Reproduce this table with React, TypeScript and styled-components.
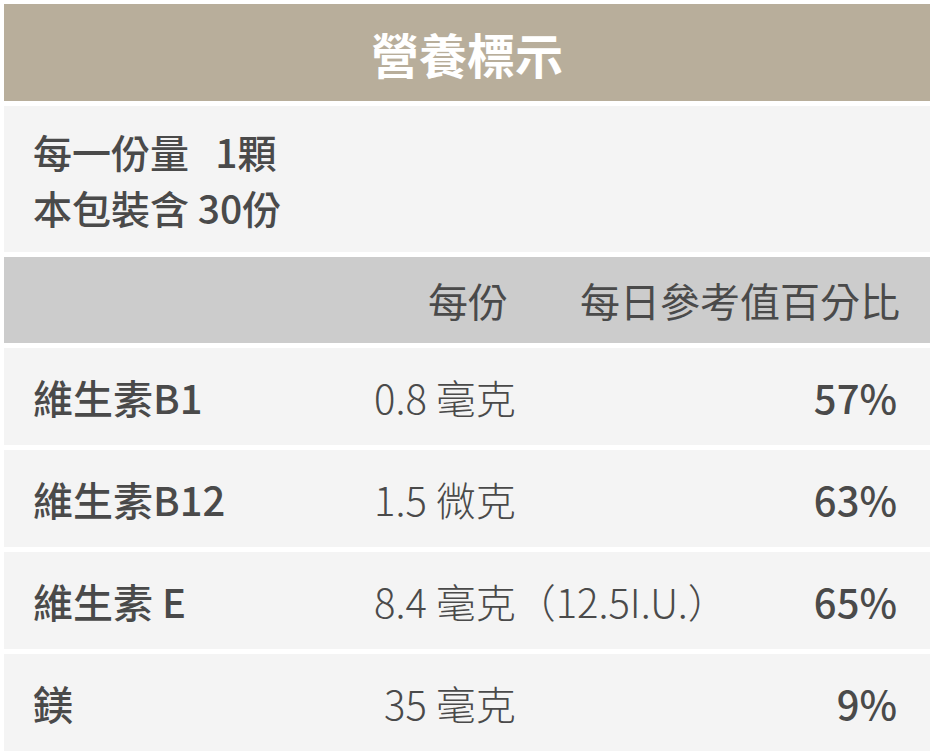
import React from 'react';
import styled, { createGlobalStyle } from 'styled-components';

const GlobalStyle = createGlobalStyle`
    html, body {
        margin: 0;
        padding: 0;
        background: #ffffff;
    }
    body {
        font-family: "Noto Sans CJK TC", "Noto Sans", sans-serif;
        color: #4a4a4a;
    }
`;

const LabelContainer = styled.div`
    width: 926px;
    padding: 4px;
    display: flex;
    flex-direction: column;
    gap: 5px;
`;

const Title = styled.div`
    height: 97px;
    background-color: #b8ae9b;
    color: #ffffff;
    font-size: 48px;
    font-weight: 700;
    display: flex;
    align-items: center;
    justify-content: center;
`;

const ServingBox = styled.div`
    height: 146px;
    background-color: #f4f4f4;
    padding: 0 29px;
    box-sizing: border-box;
    display: flex;
    flex-direction: column;
    justify-content: center;
    font-size: 39px;
    font-weight: 500;
    line-height: 56px;
`;

const ColumnHeader = styled.div`
    height: 86px;
    background-color: #cccccc;
    padding: 0 30px;
    box-sizing: border-box;
    display: flex;
    align-items: center;
    justify-content: flex-end;
    gap: 72px;
    font-size: 40px;
    font-weight: 400;
`;

const Row = styled.div`
    height: 97px;
    background-color: #f4f4f4;
    padding: 0 33px 0 29px;
    box-sizing: border-box;
    display: grid;
    grid-template-columns: 341px 1fr auto;
    align-items: center;
    font-size: 40px;
`;

const Name = styled.div`
    font-weight: 500;
`;

const Amount = styled.div<{ $indent?: number }>`
    font-weight: 300;
    padding-left: ${props => props.$indent || 0}px;
    white-space: nowrap;
`;

const Percent = styled.div`
    font-weight: 500;
    text-align: right;
`;

const nutrients = [
    { name: '維生素B1', amount: '0.8 毫克', percent: '57%' },
    { name: '維生素B12', amount: '1.5 微克', percent: '63%' },
    { name: '維生素 E', amount: '8.4 毫克（12.5I.U.）', percent: '65%' },
    { name: '鎂', amount: '35 毫克', percent: '9%', indent: 10 },
];

const App: React.FC = () => {
    return (
        <>
            <GlobalStyle />
            <LabelContainer>
                <Title>營養標示</Title>
                <ServingBox>
                    <div>每一份量&nbsp;&nbsp; 1顆</div>
                    <div>本包裝含 30份</div>
                </ServingBox>
                <ColumnHeader>
                    <span>每份</span>
                    <span>每日參考值百分比</span>
                </ColumnHeader>
                {nutrients.map((item, index) => (
                    <Row key={index}>
                        <Name>{item.name}</Name>
                        <Amount $indent={item.indent}>{item.amount}</Amount>
                        <Percent>{item.percent}</Percent>
                    </Row>
                ))}
            </LabelContainer>
        </>
    );
};

export default App;
